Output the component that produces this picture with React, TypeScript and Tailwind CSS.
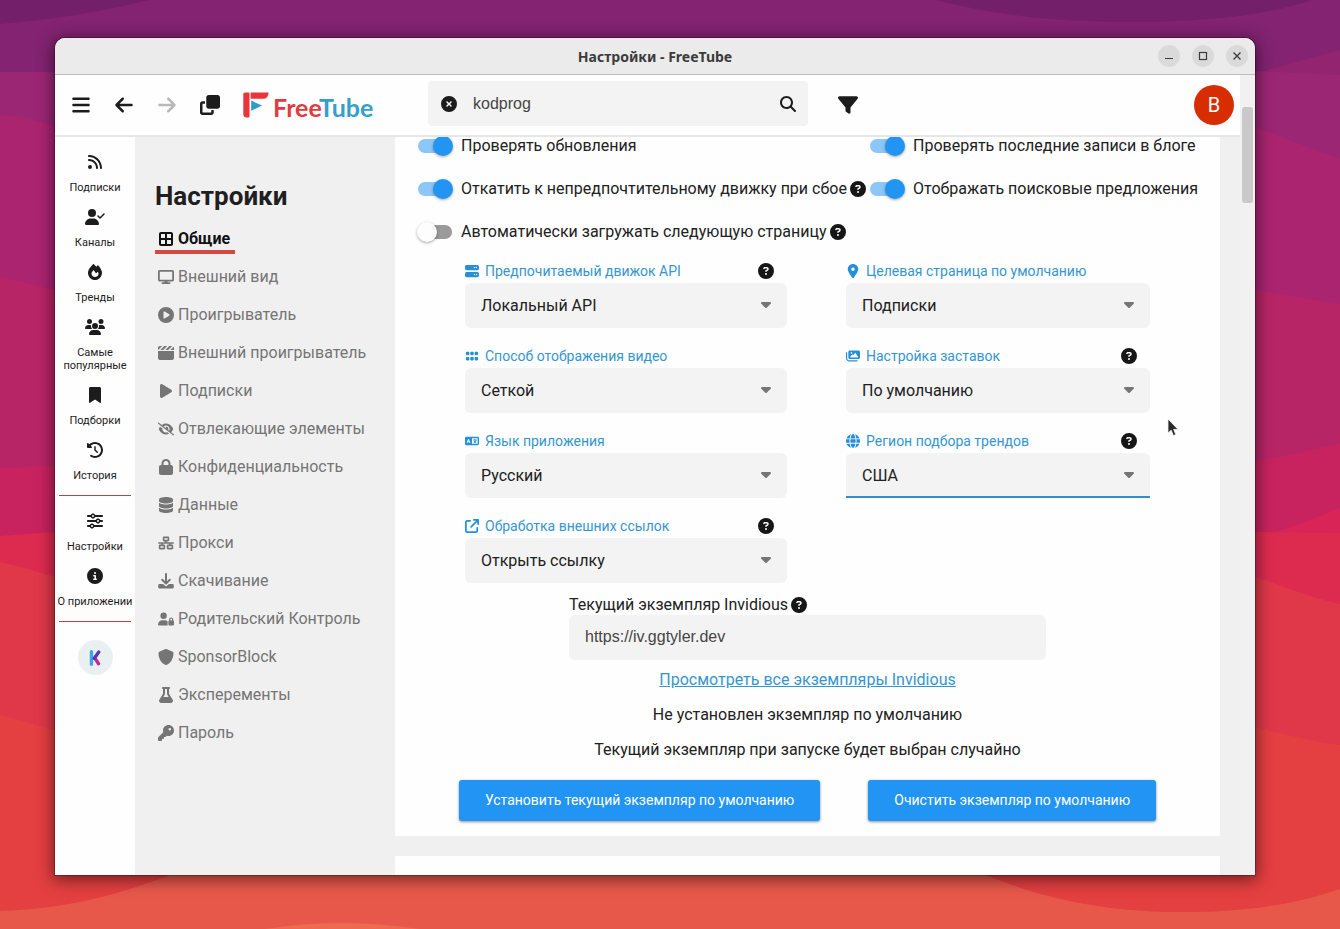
import type { ReactNode } from "react";
import type { IconType } from "react-icons";
import {
  FaArrowLeft,
  FaArrowRight,
  FaArrowUpRightFromSquare,
  FaBars,
  FaBookmark,
  FaBorderAll,
  FaCaretDown,
  FaCircleInfo,
  FaCirclePlay,
  FaCircleQuestion,
  FaCircleXmark,
  FaClapperboard,
  FaClockRotateLeft,
  FaClone,
  FaDatabase,
  FaDisplay,
  FaEyeSlash,
  FaFilter,
  FaFire,
  FaFlask,
  FaGlobe,
  FaGrip,
  FaImages,
  FaKey,
  FaLanguage,
  FaLocationDot,
  FaLock,
  FaMagnifyingGlass,
  FaNetworkWired,
  FaPlay,
  FaRss,
  FaServer,
  FaShield,
  FaSliders,
  FaUserCheck,
  FaUserLock,
  FaUsers,
} from "react-icons/fa6";

function Wallpaper() {
  return (
    <svg
      className="absolute inset-0 h-full w-full"
      viewBox="0 0 1340 929"
      preserveAspectRatio="none"
      aria-hidden="true"
    >
      <rect width="1340" height="929" fill="#741f6a" />
      <path d="M0 24C50 20 100 12 150 0H935C1000 16 1060 22 1130 22C1210 22 1270 14 1312 0H1340V929H0Z" fill="#832371" />
      <path d="M1255 74C1280 66 1310 58 1340 50V100H1255Z" fill="#922470" />
      <path d="M0 72H55C400 60 900 60 1255 71L1340 75V929H0Z" fill="#9b2674" />
      <path d="M0 72H55V36H1255V71H0Z" fill="#832371" />
      <path d="M0 115C20 116 40 121 55 127H1255C1280 136 1310 149 1340 158V929H0Z" fill="#ab2470" />
      <path d="M0 277C20 281 40 287 55 290H1255C1280 293 1310 300 1340 304V929H0Z" fill="#b82567" />
      <path d="M0 468L55 466L1255 461C1280 458 1310 450 1340 444V929H0Z" fill="#c8235f" />
      <path d="M1270 534C1295 526 1318 517 1340 508V560H1270Z" fill="#d92457" />
      <path d="M0 536L55 532H1255L1340 533V929H0Z" fill="#dd2b4f" />
      <path d="M0 562C20 566 40 573 55 577H1255C1280 585 1310 598 1340 604V929H0Z" fill="#e03849" />
      <path d="M0 715C20 719 40 727 55 730L1255 727C1280 733 1310 741 1340 745V929H0Z" fill="#e43f41" />
      <path d="M0 911C60 909 110 898 170 875H985C1045 899 1105 912 1183 912C1250 912 1300 903 1340 889V929H0Z" fill="#e8584a" />
      <path d="M265 929C315 921 365 921 420 929Z" fill="#ef6a53" />
    </svg>
  );
}

function DownloadIcon() {
  return (
    <svg viewBox="0 0 16 16" className="h-4 w-4" fill="none" aria-hidden="true">
      <path d="M8 1V10.5M4.2 6.8L8 10.6L11.8 6.8" stroke="currentColor" strokeWidth="2" strokeLinecap="round" strokeLinejoin="round" />
      <path d="M1.6 11H5L8 13.6L11 11H14.4A1.4 1.4 0 0 1 15.8 12.4V14.2A1.4 1.4 0 0 1 14.4 15.6H1.6A1.4 1.4 0 0 1 .2 14.2V12.4A1.4 1.4 0 0 1 1.6 11Z" fill="currentColor" />
    </svg>
  );
}

function Logo() {
  return (
    <a href="#home" className="ml-3 flex items-center" aria-label="FreeTube">
      <svg viewBox="0 0 26 26" className="h-[26px] w-[26px]" aria-hidden="true">
        <path d="M2 .5H5.5A1 1 0 0 1 6.5 1.5V24.5A1 1 0 0 1 5.5 25.5H3Q.3 25 .3 22V2.2Q.3 .5 2 .5Z" fill="#e8343a" />
        <path d="M7.6 .5H25.6Q25.4 6.8 20 6.8H7.6Z" fill="#e8343a" />
        <path d="M8.2 8.6L19 13.6L8.2 18.8Z" fill="#2f9cc8" />
      </svg>
      <span className="ml-1 pt-1 font-['Lato',sans-serif] text-[25px] leading-7 font-bold text-[#df3c40]">
        Free<span className="text-[#369fc8]">Tube</span>
      </span>
    </a>
  );
}

function HeaderButton({ label, icon: Icon, muted }: { label: string; icon: IconType; muted?: boolean }) {
  return (
    <button
      type="button"
      aria-label={label}
      className={
        muted
          ? "flex h-10 w-[43px] items-center justify-center text-[20px] text-[#b9b9b9]"
          : "flex h-10 w-[43px] items-center justify-center text-[20px] text-[#1c1c1c]"
      }
    >
      <Icon />
    </button>
  );
}

function TitleBar() {
  return (
    <div className="grid h-[37px] shrink-0 grid-cols-[1fr_auto_1fr] items-center border-b border-[#bdbdbd] bg-[#ebebeb] px-[7px]">
      <span />
      <h1 className="font-['Noto_Sans',sans-serif] text-[14px] font-bold text-[#3b3b3b]">Настройки - FreeTube</h1>
      <div className="flex justify-end gap-3">
        {["Свернуть", "Развернуть", "Закрыть"].map((name, i) => (
          <button
            key={name}
            type="button"
            aria-label={name}
            className="flex h-[22px] w-[22px] items-center justify-center rounded-full bg-[#dadada]"
          >
            <svg viewBox="0 0 10 10" className="h-2.5 w-2.5" fill="none" stroke="#3a3a3a" aria-hidden="true">
              {i === 0 && <path d="M1 7.5H9" />}
              {i === 1 && <rect x="1.5" y="1.5" width="7" height="7" strokeWidth="1.2" />}
              {i === 2 && <path d="M1.5 1.5L8.5 8.5M8.5 1.5L1.5 8.5" strokeWidth="1.3" />}
            </svg>
          </button>
        ))}
      </div>
    </div>
  );
}

function TopNav() {
  return (
    <header className="flex h-[62px] shrink-0 items-center border-b-2 border-[#e6e6e6] bg-[#fefefe] pr-1.5 pl-1">
      <div className="flex w-[369px] items-center">
        <HeaderButton label="Меню" icon={FaBars} />
        <HeaderButton label="Назад" icon={FaArrowLeft} />
        <HeaderButton label="Вперёд" icon={FaArrowRight} muted />
        <HeaderButton label="Новое окно" icon={FaClone} />
        <Logo />
      </div>
      <div className="mb-[3px] flex h-[45px] w-[380px] items-center rounded bg-[#f3f3f3] pr-3 pl-[13px] text-[#1c1c1c]">
        <button type="button" aria-label="Очистить">
          <FaCircleXmark className="h-4 w-4" />
        </button>
        <input
          type="text"
          aria-label="Поиск"
          defaultValue="kodprog"
          className="ml-4 min-w-0 flex-1 bg-transparent font-['Liberation_Sans',sans-serif] text-[16px] text-[#454545] outline-none"
        />
        <button type="button" aria-label="Искать">
          <FaMagnifyingGlass className="h-4 w-4" />
        </button>
      </div>
      <div className="ml-[18px] flex-1">
        <HeaderButton label="Фильтры" icon={FaFilter} />
      </div>
      <button
        type="button"
        className="flex h-10 w-10 items-center justify-center rounded-full bg-[#d82d00] text-[20px] text-white"
      >
        B
      </button>
    </header>
  );
}

const navMain: [string, IconType][] = [
  ["Подписки", FaRss],
  ["Каналы", FaUserCheck],
  ["Тренды", FaFire],
  ["Самые популярные", FaUsers],
  ["Подборки", FaBookmark],
  ["История", FaClockRotateLeft],
];

const navExtra: [string, IconType][] = [
  ["Настройки", FaSliders],
  ["О приложении", FaCircleInfo],
];

function NavItem({ label, icon: Icon }: { label: string; icon: IconType }) {
  return (
    <a href="#nav" className="flex flex-col items-center pt-[14px] pb-px text-center text-[11px] leading-[13px] text-[#1c1c1c]">
      <Icon className="mb-[11px] h-4 w-5" />
      {label}
    </a>
  );
}

function SideNav() {
  return (
    <nav className="w-20 shrink-0 bg-[#fefefe] pt-[3px]">
      {navMain.map(([label, icon]) => (
        <NavItem key={label} label={label} icon={icon} />
      ))}
      <hr className="mx-1 mt-3 mb-[3px] border-[#b8453f]" />
      {navExtra.map(([label, icon]) => (
        <NavItem key={label} label={label} icon={icon} />
      ))}
      <hr className="mx-1 mt-3 mb-[18px] border-[#b8453f]" />
      <a href="#channel" aria-label="Канал" className="mx-auto flex h-[35px] w-[35px] items-center justify-center rounded-full bg-[#eaf0f1]">
        <svg viewBox="0 0 14 18" className="h-4 w-3.5" fill="none" strokeWidth="3.8" aria-hidden="true">
          <path d="M3 2V16" stroke="#3aa9dc" strokeLinecap="round" />
          <path d="M7 9.4L11 15.4" stroke="#c32a97" strokeLinecap="round" />
          <path d="M11.2 2.4L6.2 9.4" stroke="#5a35b5" strokeLinecap="round" />
        </svg>
      </a>
    </nav>
  );
}

const sections: [string, IconType | typeof DownloadIcon][] = [
  ["Внешний вид", FaDisplay],
  ["Проигрыватель", FaCirclePlay],
  ["Внешний проигрыватель", FaClapperboard],
  ["Подписки", FaPlay],
  ["Отвлекающие элементы", FaEyeSlash],
  ["Конфиденциальность", FaLock],
  ["Данные", FaDatabase],
  ["Прокси", FaNetworkWired],
  ["Скачивание", DownloadIcon],
  ["Родительский Контроль", FaUserLock],
  ["SponsorBlock", FaShield],
  ["Эксперементы", FaFlask],
  ["Пароль", FaKey],
];

function SettingsMenu() {
  return (
    <nav className="w-[260px] shrink-0 pt-10 pl-5 text-[#757575]">
      <h2 className="text-[26px] leading-[38px] font-bold text-[#1f1f1f]">Настройки</h2>
      <a href="#general" className="mt-[5px] flex h-[38px] w-20 items-center text-[#111]">
        <span className="flex h-[30px] w-full items-center border-b-4 border-[#d24a40] pt-1 font-bold">
          <span className="mr-px flex w-[22px] justify-center">
            <FaBorderAll />
          </span>
          Общие
        </span>
      </a>
      {sections.map(([label, Icon]) => (
        <a key={label} href="#section" className="flex h-[38px] items-center">
          <span className="mr-px flex w-[22px] justify-center">
            <Icon />
          </span>
          {label}
        </a>
      ))}
    </nav>
  );
}

function Help({ className = "" }: { className?: string }) {
  return (
    <button type="button" aria-label="Справка" className={`shrink-0 text-[#161616] ${className}`}>
      <FaCircleQuestion className="h-4 w-4" />
    </button>
  );
}

function Toggle({ label, on, help }: { label: string; on?: boolean; help?: boolean }) {
  return (
    <div className="flex h-[43px] items-center">
      <label className="flex items-center whitespace-nowrap">
        <input type="checkbox" defaultChecked={on} className="peer sr-only" />
        <span className="flex h-3.5 w-[34px] shrink-0 items-center rounded-full bg-[#9a9a9a] peer-checked:bg-[#8cc7f8] peer-checked:[&>span]:ml-[15px] peer-checked:[&>span]:bg-[#2294f3]">
          <span className="-ml-px h-5 w-5 shrink-0 rounded-full bg-[#fdfdfd] shadow-[0_1px_3px_rgba(0,0,0,0.35)]" />
        </span>
        <span className="ml-[9px]">{label}</span>
      </label>
      {help && <Help className="ml-[3px]" />}
    </div>
  );
}

type FieldProps = { id: string; label: string; value: string; icon: ReactNode; help?: boolean; focused?: boolean };

function SelectField({ id, label, value, icon, help, focused }: FieldProps) {
  return (
    <div>
      <div className="flex h-6 items-center justify-between pr-[13px]">
        <label htmlFor={id} className="flex items-center text-[14px] text-[#3596cf]">
          <span className="flex w-5 text-[#2590d8]">{icon}</span>
          {label}
        </label>
        {help && <Help />}
      </div>
      <div className="relative">
        <select
          id={id}
          className={
            focused
              ? "h-[45px] w-full appearance-none rounded-t-md bg-[#f3f3f3] pl-4 shadow-[inset_0_-2px_0_#2f8fd0] outline-none"
              : "h-[45px] w-full appearance-none rounded-md bg-[#f3f3f3] pl-4 outline-none"
          }
        >
          <option>{value}</option>
        </select>
        <FaCaretDown className="pointer-events-none absolute top-[13px] right-[13px] h-4 w-4 text-[#757575]" />
      </div>
    </div>
  );
}

const fields: FieldProps[] = [
  { id: "api", label: "Предпочитаемый движок API", value: "Локальный API", icon: <FaServer />, help: true },
  { id: "landing", label: "Целевая страница по умолчанию", value: "Подписки", icon: <FaLocationDot /> },
  { id: "view", label: "Способ отображения видео", value: "Сеткой", icon: <FaGrip /> },
  { id: "thumbs", label: "Настройка заставок", value: "По умолчанию", icon: <FaImages />, help: true },
  { id: "locale", label: "Язык приложения", value: "Русский", icon: <FaLanguage /> },
  { id: "region", label: "Регион подбора трендов", value: "США", icon: <FaGlobe />, help: true, focused: true },
  { id: "links", label: "Обработка внешних ссылок", value: "Открыть ссылку", icon: <FaArrowUpRightFromSquare />, help: true },
];

function GeneralSettings() {
  return (
    <main className="flex min-w-0 flex-1 flex-col overflow-hidden pr-5">
      <section className="-mt-[13px] bg-[#fefefe] pb-[15px]">
        <div className="grid grid-cols-[452px_1fr] pl-[23px]">
          <Toggle label="Проверять обновления" on />
          <Toggle label="Проверять последние записи в блоге" on />
          <Toggle label="Откатить к непредпочтительному движку при сбое" on help />
          <Toggle label="Отображать поисковые предложения" on />
          <Toggle label="Автоматически загружать следующую страницу" help />
        </div>
        <div className="mt-1.5 grid grid-cols-[322fr_304fr] gap-x-[59px] gap-y-4 px-[70px]">
          {fields.map((f) => (
            <SelectField key={f.id} {...f} />
          ))}
        </div>
        <div className="mx-auto mt-[11px] w-[477px]">
          <div className="flex h-[21px] items-center">
            <label htmlFor="instance">Текущий экземпляр Invidious</label>
            <Help className="ml-[3px]" />
          </div>
          <input
            id="instance"
            type="text"
            defaultValue="https://iv.ggtyler.dev"
            className="h-[45px] w-full rounded-md bg-[#f3f3f3] px-4 pb-0.5 font-['Liberation_Sans',sans-serif] text-[16px] text-[#454545] outline-none"
          />
        </div>
        <div className="mt-2 flex flex-col items-center gap-[11px] leading-6">
          <a href="#instances" className="text-[#3596cf] underline">
            Просмотреть все экземпляры Invidious
          </a>
          <p>Не установлен экземпляр по умолчанию</p>
          <p>Текущий экземпляр при запуске будет выбран случайно</p>
        </div>
        <div className="mt-[18px] flex justify-center gap-12 text-[14px] text-white">
          <button type="button" className="h-[41px] rounded-[3px] bg-[#2294f3] px-[26px] shadow-[0_1px_3px_rgba(0,0,0,0.45)]">
            Установить текущий экземпляр по умолчанию
          </button>
          <button type="button" className="h-[41px] rounded-[3px] bg-[#2294f3] px-[26px] shadow-[0_1px_3px_rgba(0,0,0,0.45)]">
            Очистить экземпляр по умолчанию
          </button>
        </div>
      </section>
      <section className="mt-5 flex-1 bg-[#fefefe]" />
    </main>
  );
}

function Pointer() {
  return (
    <svg viewBox="0 0 12 19" className="pointer-events-none absolute top-[418px] left-[1167px] h-[19px] w-3" aria-hidden="true">
      <path d="M1 1V15L4.2 12.2L6.4 17.6L8.8 16.6L6.6 11.4H11Z" fill="#2a2a2a" stroke="#f4f4f4" strokeWidth=".8" />
    </svg>
  );
}

export default function App() {
  return (
    <div className="relative h-screen overflow-hidden pt-[38px] pr-[85px] pb-[54px] pl-[55px] font-['Roboto',sans-serif] text-[16px] text-[#212121]">
      <Wallpaper />
      <div className="relative flex h-full flex-col overflow-hidden rounded-t-[10px] bg-[#f0f0f0] shadow-[0_3px_16px_2px_rgba(0,0,0,0.5),0_0_0_1px_rgba(0,0,0,0.25)]">
        <TitleBar />
        <div className="flex min-h-0 flex-1">
          <div className="flex min-w-0 flex-1 flex-col">
            <TopNav />
            <div className="flex min-h-0 flex-1">
              <SideNav />
              <SettingsMenu />
              <GeneralSettings />
            </div>
          </div>
          <div className="w-[15px] shrink-0 bg-[#f1f1f1] px-0.5 pt-8">
            <div className="h-24 rounded-[3px] bg-[#c9c9c9]" />
          </div>
        </div>
      </div>
      <Pointer />
    </div>
  );
}
